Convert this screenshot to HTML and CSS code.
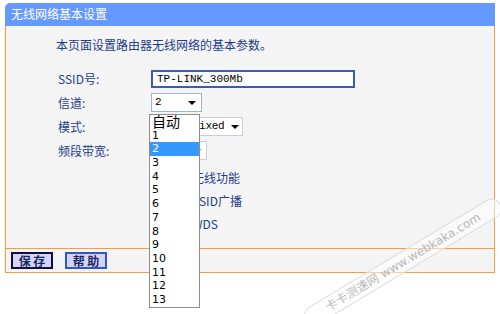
FILE: index.html
```html
<!DOCTYPE html>
<html lang="zh-CN">
<head>
    <meta charset="UTF-8">
    <title>无线网络基本设置</title>
    <link rel="stylesheet" href="styles.css">
</head>
<body>
    <div class="panel">
        <div class="panel-title">无线网络基本设置</div>
        <div class="panel-body">
            <p class="intro">本页面设置路由器无线网络的基本参数。</p>
            <div class="form">
                <span class="label">SSID号:</span>
                <div class="field"><div class="text-input">TP-LINK_300Mb</div></div>

                <span class="label">信道:</span>
                <div class="field">
                    <div class="select select-focus sel-channel"><span>2</span><i class="arrow"></i></div>
                </div>

                <span class="label">模式:</span>
                <div class="field">
                    <div class="select sel-mode"><span>11bgn mixed</span><i class="arrow"></i></div>
                </div>

                <span class="label">频段带宽:</span>
                <div class="field">
                    <div class="select sel-width"><span>自动</span><i class="arrow"></i></div>
                </div>
            </div>
            <div class="checks">
                <label class="check"><span class="box"></span>开启无线功能</label>
                <label class="check"><span class="box"></span>开启SSID广播</label>
                <label class="check"><span class="box"></span>开启WDS</label>
            </div>

            <!-- open channel list -->
            <ul class="dropdown">
                <li class="cjk">自动</li>
                <li>1</li>
                <li class="active">2</li>
                <li>3</li>
                <li>4</li>
                <li>5</li>
                <li>6</li>
                <li>7</li>
                <li>8</li>
                <li>9</li>
                <li>10</li>
                <li>11</li>
                <li>12</li>
                <li>13</li>
            </ul>
        </div>
        <div class="panel-foot">
            <button class="btn btn-save">保 存</button>
            <button class="btn btn-help">帮 助</button>
        </div>
    </div>

    <div class="watermark">卡卡测速网 www.webkaka.com</div>
</body>
</html>
```

FILE: styles.css
```css
body {
    margin: 0;
    background: #ffffff;
    font-family: "Noto Sans CJK SC", "DejaVu Sans", sans-serif;
    font-size: 12px;
    color: #1c3c8c;
    position: relative;
    width: 500px;
    height: 314px;
    overflow: hidden;
}
.panel {
    margin: 3px 0 0 5px;
    width: 490px;
    position: relative;
}
.panel-title {
    height: 23px;
    line-height: 22px;
    background: #6699ff;
    color: #ffffff;
    padding-left: 6px;
    border-radius: 5px 0 0 0;
    font-size: 12px;
}
.panel-body {
    position: relative;
    height: 222px;
    background: #f4f4f4;
    border-left: 1px solid #ff9a3c;
    border-right: 1px solid #ff9a3c;
    box-sizing: border-box;
    padding: 11px 0 0 50px;
}
.intro {
    margin: 0;
    line-height: 16px;
}
.form {
    display: grid;
    grid-template-columns: 93px auto;
    grid-auto-rows: 24px;
    margin: 17px 0 0 2px;
}
.label {
    line-height: 18px;
}
.field {
    display: flex;
}
.text-input {
    width: 192px;
    height: 14px;
    border: 2px solid #3a5bb8;
    background: #ffffff;
    color: #000000;
    font-family: "Liberation Mono", monospace;
    font-size: 11px;
    line-height: 14px;
    padding: 0 4px;
}
.select {
    position: relative;
    height: 17px;
    border: 1px solid #c8cdd8;
    background: #ffffff;
    color: #000000;
    font-family: "Liberation Mono", monospace;
    font-size: 11px;
    line-height: 17px;
    padding-left: 3px;
    box-sizing: content-box;
    margin-top: -1px;
    white-space: nowrap;
}
.select-focus {
    border-color: #9db4d8;
}
.sel-channel {
    width: 46px;
}
.sel-mode {
    width: 87px;
    letter-spacing: -0.3px;
}
.sel-width {
    width: 51px;
    font-family: "Noto Sans CJK SC", sans-serif;
}
.arrow {
    position: absolute;
    right: 5px;
    top: 7px;
    border-left: 4px solid transparent;
    border-right: 4px solid transparent;
    border-top: 4px solid #000000;
}
.sel-mode .arrow {
    right: 3px;
}
.checks {
    display: grid;
    grid-auto-rows: 23px;
    margin: 0 0 0 95px;
}
.check {
    display: flex;
    align-items: center;
    gap: 4px;
    line-height: 16px;
}
.box {
    width: 11px;
    height: 11px;
    border: 1px solid #1c5180;
    background: #ffffff;
}
.dropdown {
    position: absolute;
    left: 143px;
    top: 88px;
    width: 49px;
    margin: 0;
    padding: 0;
    list-style: none;
    background: #ffffff;
    border: 1px solid #8c8c8c;
    font-family: "DejaVu Sans", sans-serif;
    font-size: 11px;
    color: #000000;
}
.dropdown li {
    height: 13.7px;
    line-height: 13.7px;
    padding-left: 2px;
}
.dropdown li.cjk {
    font-family: "Noto Sans CJK SC", sans-serif;
    font-size: 14px;
}
.dropdown li.active {
    background: #3399ff;
    color: #ffffff;
}
.panel-foot {
    height: 25px;
    background: #f4f4f4;
    border: 1px solid #ff9a3c;
    box-sizing: border-box;
    display: flex;
    align-items: flex-start;
    gap: 12px;
    padding: 3px 0 0 5px;
}
.btn {
    width: 42px;
    height: 17px;
    padding: 0;
    background: #d4d4fa;
    font-family: "Noto Sans CJK SC", sans-serif;
    font-size: 12px;
    line-height: 13px;
    color: #1a2660;
    font-weight: bold;
}
.btn-save {
    border: 2px solid #10103a;
}
.btn-help {
    border: 2px solid #3355cc;
}
.watermark {
    position: absolute;
    left: 290px;
    top: 252px;
    width: 224px;
    height: 18px;
    line-height: 18px;
    text-align: center;
    white-space: nowrap;
    font-family: "DejaVu Sans", "Noto Sans CJK SC", sans-serif;
    font-size: 12px;
    color: #b8b8b8;
    background: rgba(255, 255, 255, 0.5);
    border: 1px solid #dcdcdc;
    border-radius: 9px;
    transform: rotate(-31deg);
}
```
